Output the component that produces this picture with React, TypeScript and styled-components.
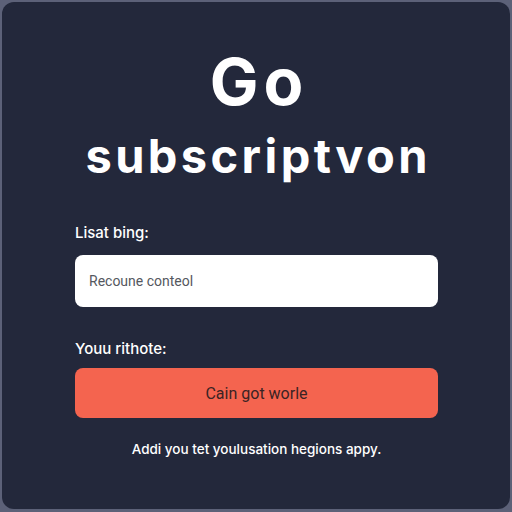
import React from "react";
import styled, { createGlobalStyle } from "styled-components";

const Global = createGlobalStyle`
  html, body { margin: 0; padding: 0; }
  body {
    background: #5c6178;
    font-family: Inter, "Noto Sans", sans-serif;
    width: 512px;
    height: 512px;
    overflow: hidden;
  }
`;

const Card = styled.div`
  box-sizing: border-box;
  margin: 2px;
  width: 508px;
  height: 507px;
  border-radius: 12px;
  background: #23283b;
  display: flex;
  flex-direction: column;
  align-items: stretch;
  padding: 47px 72px 0 73px;
`;

const Title = styled.h1`
  margin: 0;
  color: #ffffff;
  text-align: center;
  font-weight: 700;
`;

const TitleLine = styled.span<{ $size: number; $lh: number; $track: number }>`
  display: block;
  font-size: ${(p) => p.$size}px;
  line-height: ${(p) => p.$lh}px;
  letter-spacing: ${(p) => p.$track}px;
  text-indent: ${(p) => p.$track}px;
`;

const Label = styled.label<{ $top: number }>`
  display: block;
  margin-top: ${(p) => p.$top}px;
  color: #ffffff;
  font-size: 15px;
  font-weight: 500;
  line-height: 18px;
`;

const Input = styled.div`
  box-sizing: border-box;
  margin-top: 13px;
  height: 52px;
  border-radius: 8px;
  background: #ffffff;
  display: flex;
  align-items: center;
  padding-left: 14px;
  color: #555860;
  font-family: Roboto, "Liberation Sans", sans-serif;
  font-size: 14px;
`;

const Button = styled.button`
  box-sizing: border-box;
  margin-top: 10px;
  height: 50px;
  border: none;
  border-radius: 8px;
  background: #f4644f;
  color: #3a2324;
  font-family: Roboto, "Liberation Sans", sans-serif;
  font-size: 16px;
  display: flex;
  align-items: center;
  justify-content: center;
`;

const Note = styled.p`
  margin: 22px 0 0;
  text-align: center;
  color: #ffffff;
  font-size: 13.5px;
  font-weight: 500;
  line-height: 18px;
`;

export default function App() {
  return (
    <>
      <Global />
      <Card>
        <Title>
          <TitleLine $size={65} $lh={66} $track={5}>Go</TitleLine>
          <TitleLine $size={47} $lh={81} $track={3.4}>subscriptvon</TitleLine>
        </Title>
        <Label $top={28}>Lisat bing:</Label>
        <Input>Recoune conteol</Input>
        <Label $top={33}>Youu rithote:</Label>
        <Button>Cain got worle</Button>
        <Note>Addi you tet youlusation hegions appy.</Note>
      </Card>
    </>
  );
}
